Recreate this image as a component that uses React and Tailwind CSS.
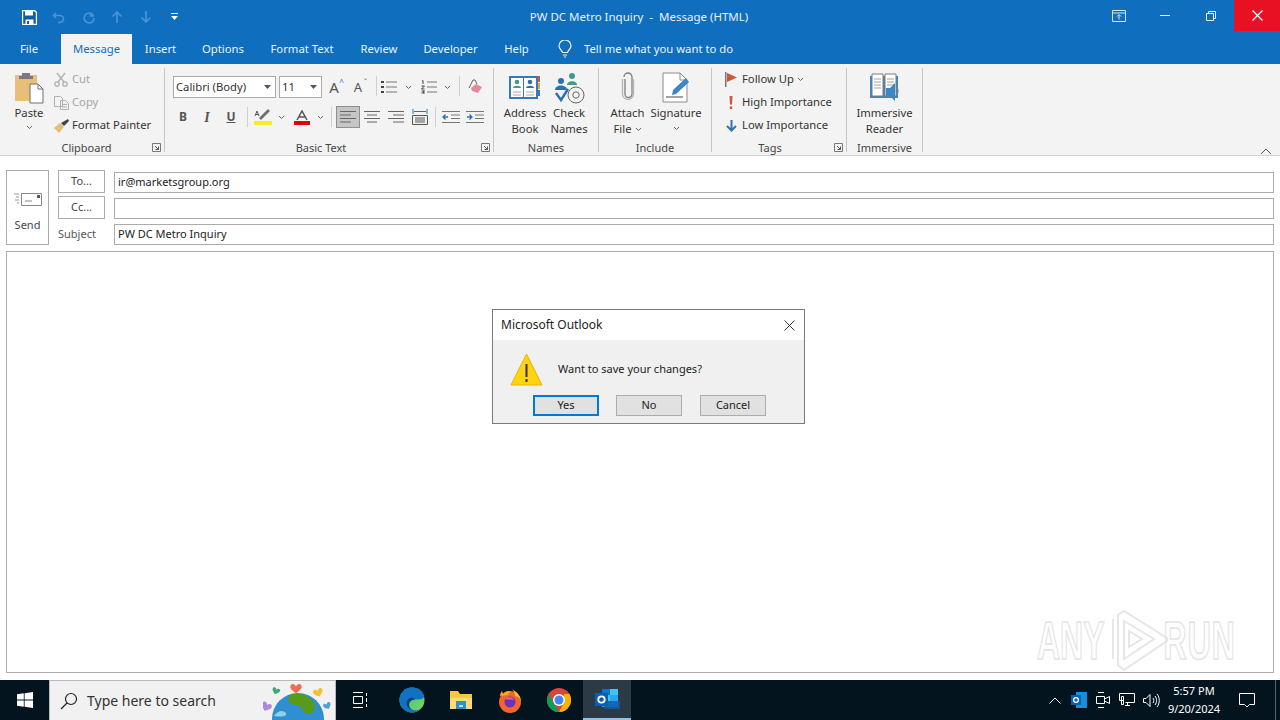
import React from "react";

const FONT = { fontFamily: '"Noto Sans", sans-serif' };

const Chev = ({ className = "" }) => (
  <svg width="7" height="5" viewBox="0 0 7 5" className={className}>
    <path d="M1 1l2.500 2.500L6 1" fill="none" stroke="#666" strokeWidth="1" />
  </svg>
);

const Launcher = () => (
  <svg width="9" height="9" viewBox="0 0 9 9" className="absolute bottom-0 right-[3px]">
    <path d="M.5 8.500V.5h8v8z" fill="none" stroke="#777" />
    <path d="M3 3l3.500 3.500M6.500 3.500v3h-3" fill="none" stroke="#555" />
  </svg>
);

const Group = ({ width, label, labelClass = "", launcher, children }) => (
  <div className={`${width} relative flex h-[84px] shrink-0 flex-col border-r border-[#c6c6c6]`}>
    <div className="flex h-[72px] shrink-0">{children}</div>
    <div className={`flex h-[16px] shrink-0 items-center justify-center text-[11px] text-[#444] ${labelClass}`}>{label}</div>
    {launcher && <Launcher />}
  </div>
);

const SmallRow = ({ icon, text, muted, after }) => (
  <div className={`flex h-[23px] items-center text-[11.25px] ${muted ? "text-[#a6a6a6]" : "text-[#333]"}`}>
    <span className="flex w-[18px] justify-center">{icon}</span>
    <span className="ml-[2px] whitespace-nowrap">{text}</span>
    {after}
  </div>
);

const Ico = ({ w = "w-[24px]", active, children }) => (
  <div className={`${w} flex h-[22px] shrink-0 items-center justify-center ${active ? "border border-[#8f8f8f] bg-[#c6c6c6]" : ""}`}>
    {children}
  </div>
);

const Lines = ({ rows }) => (
  <svg width="16" height="14" viewBox="0 0 16 14" fill="none" stroke="#666">
    {rows.map(([a, b], i) => (
      <path key={i} d={`M${a} ${1.5 + i * 3.5}H${b}`} />
    ))}
  </svg>
);

const Sep = ({ className = "" }) => <div className={`h-[20px] w-px shrink-0 bg-[#d0d0d0] ${className}`} />;

const LargeBtn = ({ width, icon, lines }) => (
  <div className={`${width} flex shrink-0 flex-col items-center text-center text-[11.25px] leading-[16px] text-[#333]`}>
    <div className="flex h-[37px] items-center justify-center">{icon}</div>
    {lines.map((l, i) => (
      <div key={i} className="flex items-center gap-[3px] whitespace-nowrap">
        {l}
      </div>
    ))}
  </div>
);

const TitleBar = () => (
  <div className="grid h-[34px] grid-cols-[1fr_auto_1fr] items-start bg-[#106ebe]">
    <div className="flex h-[34px] items-center pl-[15px]">
      <div className="flex w-[29px] justify-center">
        <svg width="15" height="15" viewBox="0 0 15 15">
          <path d="M.5.5h12l2 2v12H.5z" fill="#0f5ea3" stroke="#fff" strokeWidth="1.400" />
          <path d="M3 1h8v4.500H3z" fill="#fff" />
          <path d="M3.500 9.500h8V14h-8z" fill="#fff" />
          <path d="M5 11h2v3H5z" fill="#0f5ea3" />
        </svg>
      </div>
      {[
        "M4 3L1.500 5.500 4 8M2 5.500h6a3.500 3.500 0 010 7H6",
        "M9.500 2.500V6h3.500M12.500 5.500A5 5 0 108 13a5 5 0 005-5",
        "M7 13V2M2.500 6.500L7 2l4.500 4.500",
        "M7 1v11M2.500 7.500L7 12l4.500-4.500",
      ].map((d) => (
        <div key={d} className="flex w-[29px] justify-center">
          <svg width="14" height="14" viewBox="0 0 14 14" fill="none" stroke="#4a93d3" strokeWidth="1.700">
            <path d={d} />
          </svg>
        </div>
      ))}
      <div className="flex w-[28px] justify-center">
        <svg width="7" height="8" viewBox="0 0 7 8" fill="#fff">
          <path d="M0 0h7v1H0zM0 3h7L3.500 7z" />
        </svg>
      </div>
    </div>
    <div className="flex h-[34px] items-center whitespace-pre pr-[2px] text-[11.5px] text-[#e8f0f8]">PW DC Metro Inquiry  -  Message (HTML)</div>
    <div className="flex justify-end">
      <div className="flex h-[31px] w-[46px] items-center justify-center">
        <svg width="14" height="12" viewBox="0 0 14 12" fill="none" stroke="#cfe6f7">
          <path d="M.5.5h13v11H.5zM.5 3h13M7 9.500V5M5 6.500L7 4.500l2 2" />
        </svg>
      </div>
      <div className="flex h-[31px] w-[46px] items-center justify-center">
        <div className="h-px w-[10px] bg-[#e4f0fa]" />
      </div>
      <div className="flex h-[31px] w-[46px] items-center justify-center">
        <svg width="10" height="10" viewBox="0 0 10 10" fill="none" stroke="#e4f0fa">
          <path d="M.5 2.500h7v7h-7zM2.500 2.500v-2h7v7h-2" />
        </svg>
      </div>
      <div className="flex h-[31px] w-[46px] items-center justify-center bg-[#e81123]">
        <svg width="11" height="11" viewBox="0 0 11 11" stroke="#fff" strokeWidth="1.200">
          <path d="M.5.5l10 10M10.500.5l-10 10" />
        </svg>
      </div>
    </div>
  </div>
);

const TABS = [
  ["Insert", "w-[57px]"],
  ["Options", "w-[68px]"],
  ["Format Text", "w-[90px]"],
  ["Review", "w-[64px]"],
  ["Developer", "w-[79px]"],
  ["Help", "w-[53px]"],
];

const TabRow = () => (
  <div className="flex h-[30px] items-stretch bg-[#106ebe] text-[11.3px] text-[#eaf3fb]">
    <div className="flex w-[58px] items-center justify-center">File</div>
    <div className="ml-[3px] flex w-[71px] items-center justify-center bg-[#f3f3f3] text-[#106ebe]">Message</div>
    {TABS.map(([t, w]) => (
      <div key={t} className={`${w} flex items-center justify-center whitespace-nowrap`}>
        {t}
      </div>
    ))}
    <div className="ml-[15px] flex items-center">
      <svg width="14" height="18" viewBox="0 0 14 18" fill="none" stroke="#e8f2fa" strokeWidth="1.200">
        <path d="M4.500 12.500C4 10 1 9 1 6a6 6 0 0112 0c0 3-3 4-3.500 6.500zM5 15h4M6 17h2" />
      </svg>
    </div>
    <div className="ml-[12px] flex items-center whitespace-nowrap">Tell me what you want to do</div>
  </div>
);

const Ribbon = () => (
  <div className="flex h-[92px] shrink-0 border-b border-[#d2d2d2] bg-[#f3f3f3] pt-[4px]">
    <Group width="w-[165px]" label="Clipboard" labelClass="pl-[9px]" launcher>
      <div className="flex w-[52px] shrink-0 flex-col items-center pl-[6px] text-[11.25px] text-[#333]">
        <svg width="30" height="33" viewBox="0 0 30 33" className="mt-[3px]">
          <path d="M1 4h22v26H1z" fill="#e8bf7a" />
          <path d="M8 2h8v3h3v3H5V5h3z" fill="#7a7a7a" />
          <path d="M16 13h8l5 5v14H16z" fill="#fff" stroke="#6e6e6e" />
          <path d="M24 13v5h5" fill="none" stroke="#6e6e6e" />
        </svg>
        <div className="mt-[1px] leading-[16px]">Paste</div>
        <Chev className="mt-[4px]" />
      </div>
      <div className="flex flex-col">
        <SmallRow
          muted
          text="Cut"
          icon={
            <svg width="14" height="15" viewBox="0 0 14 15" fill="none" stroke="#b0b0b0" strokeWidth="1.300">
              <circle cx="3" cy="12" r="2.200" />
              <circle cx="11" cy="12" r="2.200" />
              <path d="M4 10L11 1M10 10L3 1" />
            </svg>
          }
        />
        <SmallRow
          muted
          text="Copy"
          icon={
            <svg width="15" height="14" viewBox="0 0 15 14" fill="none" stroke="#b0b0b0">
              <path d="M.5.500h6l2 2v8h-8zM6.500 4.500h5l3 3v6h-8zM8 8.500h5M8 11h5" />
            </svg>
          }
        />
        <SmallRow
          text="Format Painter"
          icon={
            <svg width="15" height="14" viewBox="0 0 15 14">
              <path d="M0 9l6-5 4 4-5 6z" fill="#e3bd7c" />
              <path d="M7 4l3 3 5-5-1-2z" fill="#444" />
            </svg>
          }
        />
      </div>
    </Group>

    <Group width="w-[329px]" label="Basic Text" labelClass="pr-[16px]" launcher>
      <div className="flex flex-col pl-[6px]">
        <div className="flex h-[37px] items-start pt-[8px] text-[11.25px] text-[#333]">
          <div className="ml-[2px] flex h-[22px] w-[103px] items-center justify-between border border-[#ababab] bg-white pl-[2px] pr-[4px]">
            <span>Calibri (Body)</span>
            <svg width="7" height="4" viewBox="0 0 7 4" fill="#555"><path d="M0 0h7L3.500 4z" /></svg>
          </div>
          <div className="ml-[3px] flex h-[22px] w-[43px] items-center justify-between border border-[#ababab] bg-white pl-[2px] pr-[4px]">
            <span>11</span>
            <svg width="7" height="4" viewBox="0 0 7 4" fill="#555"><path d="M0 0h7L3.500 4z" /></svg>
          </div>
          <Ico>
            <span className="relative text-[15px] leading-none text-[#555]">
              A<span className="absolute -right-[5px] -top-[2px] text-[8px] text-[#2a70b8]">^</span>
            </span>
          </Ico>
          <Ico>
            <span className="relative text-[13px] leading-none text-[#555]">
              A<span className="absolute -right-[5px] -top-[2px] text-[8px] text-[#2a70b8]">ˇ</span>
            </span>
          </Ico>
          <Sep className="ml-[6px]" />
          <Ico w="w-[20px] ml-[2px]">
            <svg width="16" height="14" viewBox="0 0 16 14" fill="none" stroke="#777">
              <path d="M5 2h11M5 7h11M5 12h11" />
              <path d="M0 2h3M0 7h3M0 12h3" stroke="#444" strokeWidth="2" />
            </svg>
          </Ico>
          <Ico w="w-[18px]"><Chev /></Ico>
          <Ico w="w-[20px] ml-[2px]">
            <svg width="16" height="14" viewBox="0 0 16 14" fill="none" stroke="#777">
              <path d="M6 2h10M6 7h10M6 12h10" />
              <path d="M1 1l1-.5v3.500M.5 6h3l-3 3h3M.5 11h3l-1.500 1 1.500 1h-3" stroke="#444" />
            </svg>
          </Ico>
          <Ico w="w-[16px]"><Chev /></Ico>
          <Sep className="ml-[4px]" />
          <Ico w="w-[32px]">
            <svg width="16" height="16" viewBox="0 0 16 16">
              <path d="M3 9l5-4 6 3-4 6-6-2z" fill="#e58a9c" />
              <path d="M1 9l4-8 2 0 2 4" fill="none" stroke="#666" />
            </svg>
          </Ico>
        </div>
        <div className="flex h-[24px] items-center text-[#555]">
          <Ico><span className="text-[12px] font-bold">B</span></Ico>
          <Ico><span className="font-['Liberation_Serif'] text-[14px] font-bold italic">I</span></Ico>
          <Ico><span className="text-[12px] font-bold underline">U</span></Ico>
          <div className="flex w-[8px] justify-center"><Sep /></div>
          <Ico>
            <svg width="18" height="16" viewBox="0 0 18 16">
              <path d="M0 12h18v4H0z" fill="#f6ec26" />
              <path d="M7 11l9-9-2-2-9 9z" fill="#6f6f6f" />
              <path d="M1 7l2-5 2 5M2 5.500h2" fill="none" stroke="#555" />
            </svg>
          </Ico>
          <Ico w="w-[12px]"><Chev /></Ico>
          <Ico w="w-[24px] ml-[3px]">
            <svg width="16" height="15" viewBox="0 0 16 15">
              <path d="M3 10L8 1l5 9M5 7h6" fill="none" stroke="#555" strokeWidth="1.500" />
              <path d="M0 11h16v4H0z" fill="#e3000f" />
            </svg>
          </Ico>
          <Ico w="w-[12px]"><Chev /></Ico>
          <div className="flex w-[10px] justify-center"><Sep /></div>
          <Ico active><Lines rows={[[0, 16], [0, 11], [0, 16], [0, 11]]} /></Ico>
          <Ico><Lines rows={[[0, 16], [3, 13], [0, 16], [3, 13]]} /></Ico>
          <Ico><Lines rows={[[0, 16], [5, 16], [0, 16], [5, 16]]} /></Ico>
          <Ico>
            <svg width="16" height="16" viewBox="0 0 16 16" fill="none" stroke="#555">
              <path d="M.5 6.500h15v9H.5zM3 9h10M3 11h10M3 13h10" />
              <path d="M1 0v5M15 0v5M2 2.500h12" stroke="#2a70b8" />
            </svg>
          </Ico>
          <div className="flex w-[7px] justify-center"><Sep /></div>
          <Ico>
            <svg width="18" height="14" viewBox="0 0 18 14" fill="none" stroke="#777">
              <path d="M0 1.500h18M9 5h9M9 8.500h9M0 12.500h18" />
              <path d="M6 7H1M3.500 4.500L1 7l2.500 2.500" stroke="#2a70b8" strokeWidth="1.300" />
            </svg>
          </Ico>
          <Ico>
            <svg width="18" height="14" viewBox="0 0 18 14" fill="none" stroke="#777">
              <path d="M0 1.500h18M9 5h9M9 8.500h9M0 12.500h18" />
              <path d="M1 7h5M3.500 4.500L6 7 3.500 9.500" stroke="#2a70b8" strokeWidth="1.300" />
            </svg>
          </Ico>
        </div>
      </div>
    </Group>

    <Group width="w-[105px]" label="Names">
      <div className="flex pl-[9px]">
        <LargeBtn
          width="w-[44px]"
          lines={["Address", "Book"]}
          icon={
            <svg width="32" height="28" viewBox="0 0 32 28">
              <path d="M1 4h27v21H1z" fill="#fff" stroke="#3a78b5" strokeWidth="2" />
              <path d="M14.500 4v21" stroke="#3a78b5" />
              <path d="M29 3h2v6h-2z" fill="#d9573f" />
              <path d="M29 10h2v6h-2z" fill="#e9a23b" />
              <path d="M29 17h2v6h-2z" fill="#3a78b5" />
              <circle cx="8" cy="9" r="2.300" fill="#3e9c8a" />
              <path d="M4 15c0-3 8-3 8 0z" fill="#3e9c8a" />
              <circle cx="21" cy="9" r="2.300" fill="#2f6eaf" />
              <path d="M17 15c0-3 8-3 8 0z" fill="#2f6eaf" />
              <path d="M4 19h8M4 22h8M17 19h8M17 22h8" stroke="#a8a8a8" />
            </svg>
          }
        />
        <LargeBtn
          width="w-[44px]"
          lines={["Check", "Names"]}
          icon={
            <svg width="32" height="32" viewBox="0 0 32 32" className="mt-[2px]">
              <circle cx="19" cy="4" r="3" fill="#3e9c8a" />
              <path d="M14 13c0-5 10-5 10 0z" fill="#3e9c8a" />
              <circle cx="8" cy="9" r="3" fill="#2f6eaf" />
              <path d="M2 18c0-6 12-6 12 0z" fill="#2f6eaf" />
              <path d="M3 21l5 7 7-11" fill="none" stroke="#2f6eaf" strokeWidth="2.400" />
              <circle cx="23" cy="23" r="8" fill="none" stroke="#666" />
              <circle cx="23" cy="23" r="3.200" fill="none" stroke="#666" />
            </svg>
          }
        />
      </div>
    </Group>

    <Group width="w-[113px]" label="Include">
      <div className="flex pl-[6px]">
        <LargeBtn
          width="w-[45px]"
          lines={["Attach", <React.Fragment key="f">File <Chev /></React.Fragment>]}
          icon={
            <svg width="14" height="30" viewBox="0 0 14 30" fill="none" stroke="#7f7f7f" strokeWidth="1.300">
              <path d="M4 7v15a3.500 3.500 0 007 0V5a4 4 0 00-8 0" />
              <path d="M1.500 7v15a5.500 5.500 0 0011 0V7" stroke="#b5b5b5" />
            </svg>
          }
        />
        <LargeBtn
          width="w-[52px]"
          lines={["Signature", <Chev key="c" className="mt-[5px]" />]}
          icon={
            <svg width="28" height="32" viewBox="0 0 28 32" className="mt-[2px]">
              <path d="M1 1h17l7 7v22H1z" fill="#fff" stroke="#8a8a8a" />
              <path d="M18 1v7h7" fill="none" stroke="#8a8a8a" />
              <path d="M4 25h17" stroke="#444" />
              <path d="M10 23l1-5 13-12 3 4-13 12z" fill="#3a86c8" />
            </svg>
          }
        />
      </div>
    </Group>

    <Group width="w-[135px]" label="Tags" labelClass="pr-[18px]" launcher>
      <div className="flex flex-col pl-[10px]">
        <SmallRow
          text="Follow Up"
          after={<Chev className="ml-[3px]" />}
          icon={
            <svg width="12" height="15" viewBox="0 0 12 15">
              <path d="M0 0h1.500v15H0z" fill="#777" />
              <path d="M2 1l10 4.500L2 10z" fill="#d2553b" />
            </svg>
          }
        />
        <SmallRow
          text="High Importance"
          icon={
            <svg width="4" height="13" viewBox="0 0 4 13" fill="#d2553b">
              <path d="M.5 0h3L3 8.500H1zM.8 10.500h2.400V13H.8z" />
            </svg>
          }
        />
        <SmallRow
          text="Low Importance"
          icon={
            <svg width="11" height="12" viewBox="0 0 11 12" fill="none" stroke="#2f73b5" strokeWidth="2">
              <path d="M5.500 0v10M1 6l4.500 4.500L10 6" />
            </svg>
          }
        />
      </div>
    </Group>

    <Group width="w-[76px]" label="Immersive">
      <div className="flex w-full justify-center">
        <LargeBtn
          width="w-[74px]"
          lines={["Immersive", "Reader"]}
          icon={
            <svg width="32" height="29" viewBox="0 0 32 29" className="mt-[1px]">
              <path d="M1 3h28v22H1z" fill="#3a86c8" />
              <path d="M3 1h11v22H3zM16 1h11v22H16z" fill="#fff" stroke="#7a7a7a" />
              <path d="M5 6h7M5 9h7M5 12h7M5 15h7M18 6h7M18 9h7M18 12h7" stroke="#a0a0a0" />
              <path d="M17 15h4l5-5v18l-5-5h-4z" fill="#3a86c8" />
              <path d="M28 14c1.500 2 1.500 6 0 8" fill="none" stroke="#888" />
            </svg>
          }
        />
      </div>
    </Group>

    <div className="ml-auto flex items-end pb-0 pr-[8px]">
      <svg width="12" height="7" viewBox="0 0 12 7" fill="none" stroke="#555">
        <path d="M1 6l5-5 5 5" />
      </svg>
    </div>
  </div>
);

const Field = ({ children }) => (
  <div className="flex h-[21px] shrink-0 items-center border border-[#ababab] bg-white pl-[3px] text-[11px] text-[#222]">{children}</div>
);

const AddrBtn = ({ children }) => (
  <div className="flex h-[23px] w-[47px] items-center justify-center border border-[#ababab] text-[11px] text-[#444]">{children}</div>
);

const Compose = () => (
  <div className="flex min-h-0 flex-1 flex-col bg-white px-[6px] pb-[7px] pt-[14px]">
    <div className="flex h-[75px] shrink-0">
      <div className="flex w-[43px] flex-col items-center border border-[#ababab] text-[11px] text-[#444]">
        <svg width="28" height="14" viewBox="0 0 28 14" className="mt-[21px]" fill="none" stroke="#888">
          <path d="M7.500 1.500h20v12h-20z" />
          <path d="M11 9h7" />
          <path d="M23 3h3v3h-3z" fill="#3f5f7f" stroke="none" />
          <path d="M0 2h5M2 5h3M1 8h4M3 11h2" stroke="#999" />
        </svg>
        <div className="mt-[11px]">Send</div>
      </div>
      <div className="ml-[9px] flex w-[56px] shrink-0 flex-col">
        <AddrBtn>To...</AddrBtn>
        <div className="h-[3px]" />
        <AddrBtn>Cc...</AddrBtn>
        <div className="flex flex-1 items-center pt-[4px] text-[11px] text-[#555]">Subject</div>
      </div>
      <div className="flex flex-1 flex-col gap-[5px] pt-[2px]">
        <Field>ir@marketsgroup.org</Field>
        <Field />
        <Field>PW DC Metro Inquiry</Field>
      </div>
    </div>
    <div className="mt-[6px] flex-1 border border-[#ababab]" />
  </div>
);

const DlgBtn = ({ children, primary }) => (
  <div className={`flex h-[21px] w-[66px] items-center justify-center bg-[#e1e1e1] text-[11px] text-[#222] ${primary ? "border-2 border-[#0078d7]" : "border border-[#adadad]"}`}>
    {children}
  </div>
);

const Dialog = () => (
  <div className="absolute left-[492px] top-[309px] flex h-[115px] w-[313px] flex-col border border-[#7a7a7a] bg-[#f0f0f0]">
    <div className="flex h-[30px] shrink-0 items-center justify-between bg-white pl-[8px] pr-[9px] text-[12px] text-[#222]">
      <span>Microsoft Outlook</span>
      <svg width="11" height="11" viewBox="0 0 11 11" stroke="#333">
        <path d="M.5.5l10 10M10.500.5l-10 10" />
      </svg>
    </div>
    <div className="flex h-[55px] shrink-0 items-center pl-[17px] pt-[3px]">
      <svg width="33" height="33" viewBox="0 0 33 33">
        <path d="M16.500 1L32 32H1z" fill="#fdd40f" stroke="#e8b400" />
        <path d="M15.500 11h2v13h-2zM15.500 26h2v3h-2z" fill="#333" />
      </svg>
      <span className="ml-[15px] text-[11px] text-[#222]">Want to save your changes?</span>
    </div>
    <div className="flex gap-[17px] pl-[40px]">
      <DlgBtn primary>Yes</DlgBtn>
      <DlgBtn>No</DlgBtn>
      <div className="ml-px"><DlgBtn>Cancel</DlgBtn></div>
    </div>
  </div>
);

const Watermark = () => (
  <div className="absolute left-[1037px] top-[608px] flex h-[64px] items-center text-transparent [-webkit-text-stroke:1px_#e4e4e4]">
    <span className="scale-y-[1.7] font-['Liberation_Sans'] text-[32px] font-bold leading-none">ANY</span>
    <svg width="58" height="62" viewBox="0 0 58 62" fill="none" stroke="#e6e6e6" strokeWidth="2" className="ml-[5px]">
      <path d="M8 6v50l6 5 43-29v-3L14 2zM14 12l30 18-30 20zM3 10v40M19 22l13 8-13 8z" />
    </svg>
    <span className="-ml-[4px] scale-y-[1.7] font-['Liberation_Sans'] text-[32px] font-bold leading-none tracking-[1px]">RUN</span>
  </div>
);

const Heart = ({ x, y, s = 1, r = 0, fill }) => (
  <path
    d="M0 3C-1-1-6-1-6 3c0 3 4 5 6 7 2-2 6-4 6-7C6-1 1-1 0 3z"
    fill={fill}
    transform={`translate(${x} ${y - 4}) rotate(${r}) scale(${s})`}
  />
);

const Taskbar = () => (
  <div className="flex h-[40px] shrink-0 items-stretch bg-[#03141f]">
    <div className="flex w-[49px] items-center justify-center">
      <svg width="16" height="16" viewBox="0 0 16 16" fill="#fff">
        <path d="M0 2.300l6.800-1v6.200H0zM7.600 1.200L16 0v7.500H7.600zM0 8.400h6.800v6.300L0 13.700zM7.600 8.400H16V16l-8.400-1.200z" />
      </svg>
    </div>
    <div className="flex w-[287px] items-center overflow-hidden border-x border-t border-[#b9b9b9] bg-[#f1f1f1] pl-[10px]">
      <svg width="18" height="18" viewBox="0 0 18 18" fill="none" stroke="#222" strokeWidth="1.200">
        <circle cx="11" cy="7" r="5.500" />
        <path d="M7 11l-6 6" />
      </svg>
      <span className="ml-[9px] whitespace-nowrap text-[14px] text-[#333]">Type here to search</span>
      <svg width="72" height="39" viewBox="0 0 72 39" className="ml-auto shrink-0 self-start">
        <circle cx="35" cy="38" r="26" fill="#2f8fd0" />
        <path d="M27 14c9-3 18 0 23 6 4 5 2 13-6 13-6-2-4-8-10-9-5 0-12-3-7-10z" fill="#5a9a1a" />
        <path d="M11 35c4-6 9-6 12-3 1 4-5 4-12 3z" fill="#8fd0e8" />
        <Heart x={33} y={7} s={0.95} fill="#ee6a50" />
        <Heart x={14} y={11} s={0.65} r={20} fill="#3aa878" />
        <Heart x={54} y={12} s={0.8} r={-20} fill="#f4c030" />
        <Heart x={63} y={26} s={0.65} r={-25} fill="#4aa0e0" />
        <Heart x={5} y={26} s={0.85} r={25} fill="#b088d8" />
      </svg>
    </div>
    <div className="flex w-[48px] items-center justify-center">
      <svg width="16" height="16" viewBox="0 0 16 16" fill="none" stroke="#fff">
        <path d="M1 .5h10M1 15.500h10M1.500 4.500h9v7h-9zM14.500 1v3M14.500 6v4M14.500 12v3" />
      </svg>
    </div>
    <div className="ml-[3px] flex w-[49px] items-center justify-center">
      <svg width="26" height="26" viewBox="0 0 26 26">
        <defs>
          <linearGradient id="edgeA" x1="0" y1="0" x2="1" y2="1">
            <stop offset="0" stopColor="#36c2a0" />
            <stop offset="1" stopColor="#7ad650" />
          </linearGradient>
        </defs>
        <circle cx="13" cy="13" r="12.500" fill="url(#edgeA)" />
        <path d="M13 .5C5 .5.5 7 .5 13c0 7 6 12.500 12.500 12.500 4 0 7-2 8-3-5 2-11 0-11-5 0-3 3-5 6-5 4 0 9 0 9-3C25 5 20 .5 13 .5z" fill="#1172c4" />
        <path d="M10 17.500c0-3 3-5 6-5-2-3-7-2-8 2-1 3 1 7 4 8-1-1-2-3-2-5z" fill="#0c3a72" />
      </svg>
    </div>
    <div className="flex w-[49px] items-center justify-center">
      <svg width="24" height="20" viewBox="0 0 24 20">
        <path d="M1 1h8l2 3h12v15H1z" fill="#f5c842" />
        <path d="M1 8h22v11H1z" fill="#f9dd72" />
        <path d="M7 11h10v8H7z" fill="#2f8fd0" />
        <path d="M10 15h4v2h-4z" fill="#bfe0f5" />
      </svg>
    </div>
    <div className="flex w-[49px] items-center justify-center">
      <svg width="24" height="25" viewBox="0 0 24 25">
        <circle cx="12" cy="14" r="11" fill="#f4652a" />
        <path d="M2 8c0-3 2-5 2-5l1 3c3-3 6-4 8-2-3 1-3 3-3 3z" fill="#f9a825" />
        <path d="M14 1c5 3 9 7 9 13 0-3-3-6-6-6 0-3-1-5-3-7z" fill="#fbc02d" />
        <circle cx="12" cy="14" r="5.500" fill="#6a34b8" />
        <path d="M7 11c3-3 8-2 9 1-3-1-6 0-9-1z" fill="#f06292" />
      </svg>
    </div>
    <div className="flex w-[49px] items-center justify-center">
      <svg width="24" height="24" viewBox="0 0 24 24">
        <circle cx="12" cy="12" r="12" fill="#db4437" />
        <path d="M12 24A12 12 0 011.600 6L7 15l5 9z" fill="#0f9d58" />
        <path d="M22.400 6A12 12 0 0112 24l5-9 0-9z" fill="#f4b400" />
        <circle cx="12" cy="12" r="6" fill="#fff" />
        <circle cx="12" cy="12" r="4.500" fill="#4285f4" />
      </svg>
    </div>
    <div className="flex w-[48px] flex-col items-center justify-center border-b-[2px] border-[#8fc3ee] bg-[#2c3a45]">
      <svg width="26" height="24" viewBox="0 0 26 24">
        <path d="M8 2h16v18H8z" fill="#28a8ea" />
        <path d="M8 2h8v6H8z" fill="#0078d4" />
        <path d="M16 2h8v6h-8zM8 8h8v6H8z" fill="#50d9ff" opacity=".6" />
        <path d="M10 14h16v8H10z" fill="#0f5ea8" opacity=".85" />
        <path d="M1 6h13v13H1z" fill="#0a5fb0" />
        <circle cx="7.500" cy="12.500" r="3.200" fill="none" stroke="#fff" strokeWidth="1.800" />
      </svg>
    </div>
    <div className="ml-auto flex items-center text-white">
      <div className="flex w-[24px] justify-center">
        <svg width="12" height="7" viewBox="0 0 12 7" fill="none" stroke="#fff">
          <path d="M.5 6.500L6 1l5.500 5.500" />
        </svg>
      </div>
      <div className="flex w-[24px] justify-center">
        <svg width="16" height="16" viewBox="0 0 16 16">
          <path d="M5 0h11v16H5z" fill="#1490df" />
          <path d="M0 3h10v10H0z" fill="#0a5fb0" />
          <circle cx="5" cy="8" r="2.400" fill="none" stroke="#fff" strokeWidth="1.300" />
        </svg>
      </div>
      <div className="flex w-[24px] justify-center">
        <svg width="14" height="16" viewBox="0 0 14 16" fill="none" stroke="#fff">
          <path d="M2 .5h6M2 15.500h6M.5 4.500h8v7h-8zM8.500 7l5-2.500v7l-5-2.500" />
        </svg>
      </div>
      <div className="flex w-[24px] justify-center">
        <svg width="16" height="16" viewBox="0 0 16 16" fill="none" stroke="#fff">
          <path d="M.5 1.500h15v9h-9M.5 1.500v7h4M2.500 4.500h2v8h-2zM6 13.500h5M8.500 10.500v3" />
        </svg>
      </div>
      <div className="flex w-[24px] justify-center">
        <svg width="17" height="15" viewBox="0 0 17 15" fill="none" stroke="#fff">
          <path d="M.5 5.500h2.500L7 1.500v12l-4-4H.5zM10 5c1 1.500 1 3.500 0 5M12 3c2 2.500 2 6.500 0 9M14 1c3 3.500 3 9.500 0 13" />
        </svg>
      </div>
      <div className="ml-[2px] flex w-[58px] flex-col items-center text-[11px] leading-[18px]">
        <span>5:57 PM</span>
        <span>9/20/2024</span>
      </div>
      <div className="ml-[3px] flex w-[42px] items-center justify-center">
        <svg width="16" height="15" viewBox="0 0 16 15" fill="none" stroke="#fff">
          <path d="M.5.500h15v11h-5L8 14l-2.500-2.500h-5z" />
        </svg>
      </div>
      <div className="ml-[7px] w-[5px] self-stretch border-l border-[#5a656d]" />
    </div>
  </div>
);

export default function App() {
  return (
    <div className="relative flex h-[720px] w-[1280px] flex-col overflow-hidden bg-white" style={FONT}>
      <TitleBar />
      <TabRow />
      <Ribbon />
      <Compose />
      <Taskbar />
      <Dialog />
      <Watermark />
    </div>
  );
}
